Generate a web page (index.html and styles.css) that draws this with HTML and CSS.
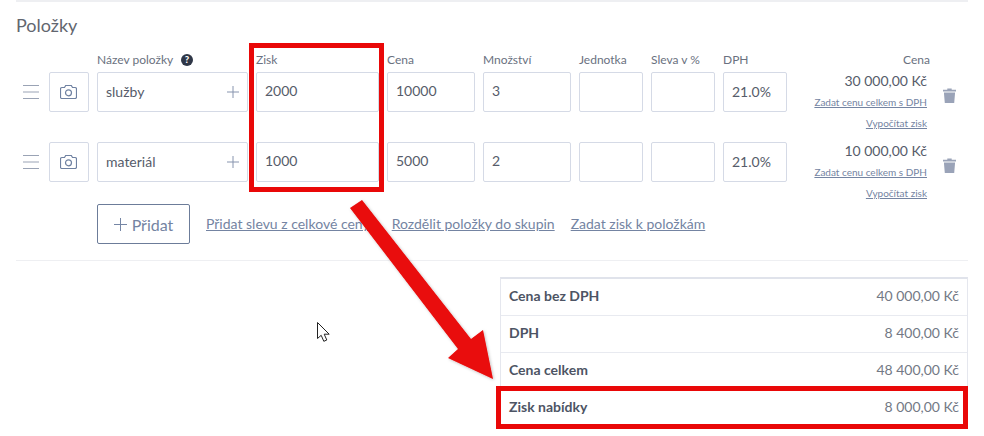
FILE: index.html
```html
<!DOCTYPE html>
<html lang="cs">
<head>
<meta charset="utf-8">
<title>Položky</title>
<link rel="stylesheet" href="styles.css">
</head>
<body>
<main class="page">
  <div class="rule-top"></div>
  <h2 class="title">Položky</h2>

  <div class="items">
    <div class="labels">
      <span class="label-name">Název položky
        <svg class="help" viewBox="0 0 12 12" width="12" height="12"><circle cx="6" cy="6" r="6" fill="#2f3747"/><text x="6" y="9.400" text-anchor="middle" class="help-mark">?</text></svg>
      </span>
      <span>Zisk</span><span>Cena</span><span>Množství</span><span>Jednotka</span><span>Sleva v %</span><span>DPH</span>
      <span class="label-price">Cena</span>
    </div>

    <div class="row">
      <svg class="drag" viewBox="0 0 16 14" width="16" height="14"><path d="M0 .5h16M0 7h16M0 13.500h16" stroke="#9aa3b5" fill="none"/></svg>
      <div class="box camera"><svg viewBox="0 0 17 14" width="17" height="14"><path d="M2 2.500h2.500l1.200-2h5.600l1.200 2H15q1.500 0 1.500 1.500v8q0 1.500-1.500 1.500H2Q.5 13.500.5 12V4Q.5 2.500 2 2.500z" fill="none" stroke="#6f81a1" stroke-width="1.200"/><circle cx="8.500" cy="7.800" r="3" fill="none" stroke="#6f81a1" stroke-width="1.200"/></svg></div>
      <div class="box name"><span>služby</span><svg viewBox="0 0 12 12" width="12" height="12"><path d="M6 0v12M0 6h12" stroke="#8794ae" fill="none"/></svg></div>
      <div class="box">2000</div>
      <div class="box">10000</div>
      <div class="box">3</div>
      <div class="box"></div>
      <div class="box"></div>
      <div class="box box-vat">21.0%</div>
      <div class="price">
        <span class="amount">30 000,00 Kč</span>
        <a class="mini-link">Zadat cenu celkem s DPH</a>
        <a class="mini-link">Vypočítat zisk</a>
      </div>
      <svg class="trash" viewBox="0 0 13 15" width="13" height="15"><path d="M0 1.800h4.300V.5h4.400v1.300H13v1.700H0zM.9 4.500h11.200l-.9 10.500H1.800z" fill="#9aa3b8"/></svg>
    </div>

    <div class="row">
      <svg class="drag" viewBox="0 0 16 14" width="16" height="14"><path d="M0 .5h16M0 7h16M0 13.500h16" stroke="#9aa3b5" fill="none"/></svg>
      <div class="box camera"><svg viewBox="0 0 17 14" width="17" height="14"><path d="M2 2.500h2.500l1.200-2h5.600l1.200 2H15q1.500 0 1.500 1.500v8q0 1.500-1.500 1.500H2Q.5 13.500.5 12V4Q.5 2.500 2 2.500z" fill="none" stroke="#6f81a1" stroke-width="1.200"/><circle cx="8.500" cy="7.800" r="3" fill="none" stroke="#6f81a1" stroke-width="1.200"/></svg></div>
      <div class="box name"><span>materiál</span><svg viewBox="0 0 12 12" width="12" height="12"><path d="M6 0v12M0 6h12" stroke="#8794ae" fill="none"/></svg></div>
      <div class="box">1000</div>
      <div class="box">5000</div>
      <div class="box">2</div>
      <div class="box"></div>
      <div class="box"></div>
      <div class="box box-vat">21.0%</div>
      <div class="price">
        <span class="amount">10 000,00 Kč</span>
        <a class="mini-link">Zadat cenu celkem s DPH</a>
        <a class="mini-link">Vypočítat zisk</a>
      </div>
      <svg class="trash" viewBox="0 0 13 15" width="13" height="15"><path d="M0 1.800h4.300V.5h4.400v1.300H13v1.700H0zM.9 4.500h11.200l-.9 10.500H1.800z" fill="#9aa3b8"/></svg>
    </div>

    <div class="actions">
      <button class="add"><svg viewBox="0 0 13 13" width="13" height="13"><path d="M6.500 0v13M0 6.500h13" stroke="#7586a5" fill="none"/></svg>Přidat</button>
      <a class="link link-first">Přidat slevu z celkové ceny</a>
      <a class="link">Rozdělit položky do skupin</a>
      <a class="link">Zadat zisk k položkám</a>
    </div>
  </div>

  <div class="rule-mid"></div>

  <div class="summary-wrap">
    <div class="summary">
      <div class="sum-row"><b>Cena bez DPH</b><span>40 000,00 Kč</span></div>
      <div class="sum-row"><b>DPH</b><span>8 400,00 Kč</span></div>
      <div class="sum-row"><b>Cena celkem</b><span>48 400,00 Kč</span></div>
      <div class="sum-row"><b>Zisk nabídky</b><span>8 000,00 Kč</span></div>
    </div>
  </div>
</main>

<div class="mark mark-zisk"></div>
<div class="mark mark-total"></div>

<svg class="overlay" viewBox="0 0 984 436" width="984" height="436">
  <defs><filter id="soft" x="-10%" y="-10%" width="120%" height="120%"><feDropShadow dx="1" dy="1" stdDeviation="1.500" flood-color="#000" flood-opacity=".25"/></filter></defs>
  <polygon points="350,208 362,200 471,339 483,330 493,379 448,358 458,349" fill="#e90808" filter="url(#soft)"/>
  <path d="M317.500 322.500v16l3.700-3.200 2.600 6 3-1.300-2.600-5.800h5z" fill="#fff" stroke="#222" stroke-width="1"/>
</svg>
</body>
</html>
```
FILE: styles.css
```css
* { box-sizing: border-box; }
html, body { margin: 0; padding: 0; background: #fff; }
body {
  width: 984px;
  height: 436px;
  overflow: hidden;
  position: relative;
  font-family: Lato, "Liberation Sans", sans-serif;
  color: #4a5160;
}
.page { padding: 0 16px; }
.rule-top { height: 2px; background: #eeeff2; }
.title {
  margin: 12px 0 0;
  height: 22px;
  font-size: 18px;
  line-height: 22px;
  font-weight: 400;
  color: #62666f;
}
.items { padding-top: 15px; }
.labels, .row {
  display: grid;
  grid-template-columns: 25px 40px 151px 123px 88px 88px 64px 64px 64px 132px 29px;
  column-gap: 8px;
}
.labels {
  height: 21px;
  grid-template-rows: 18px;
  font-size: 12px;
  line-height: 18px;
  color: #6a7180;
}
.labels > span:first-child { grid-column: 3; }
.label-name { display: flex; align-items: center; gap: 8px; }
.help { display: block; }
.help-mark { font-size: 9.500px; font-weight: 900; fill: #fff; }
.label-price { text-align: right; margin-right: -3px; }
.row { grid-template-rows: 40px; height: 40px; align-items: center; }
.row + .row { margin-top: 30px; }
.drag { justify-self: end; margin-right: 2px; }
.box {
  height: 40px;
  border: 1px solid #d5dae6;
  border-radius: 2px;
  padding: 0 8px;
  font-size: 14px;
  line-height: 36px;
  color: #565c6a;
  background: #fff;
}
.box-vat { line-height: 38px; }
.camera { display: flex; align-items: center; justify-content: center; padding: 0 2px 0 0; }
.name { display: flex; align-items: center; justify-content: space-between; padding-right: 8px; }
.price {
  display: flex;
  flex-direction: column;
  align-items: flex-end;
  align-self: start;
}
.amount { font-size: 14px; line-height: 18px; color: #565c6a; margin-bottom: 2px; }
.mini-link {
  font-size: 10px;
  line-height: 21px;
  color: #7484a2;
  text-decoration: underline;
}
.trash { justify-self: start; align-self: start; margin: 16px 0 0 8px; }
.actions {
  display: flex;
  align-items: center;
  height: 40px;
  margin: 22px 0 0 81px;
  gap: 16px;
}
.add {
  width: 93px;
  height: 40px;
  display: flex;
  align-items: center;
  justify-content: center;
  gap: 5px;
  border: 1px solid #6c7c99;
  border-radius: 2px;
  background: #fff;
  color: #7484a2;
  font: 400 16px Lato, "Liberation Sans", sans-serif;
  padding: 0;
}
.link {
  font-size: 14px;
  line-height: 18px;
  color: #7484a2;
  text-decoration: underline;
}
.link-first { margin-right: 6px; }
.rule-mid { height: 1px; background: #eeeff2; margin-top: 16px; }
.summary-wrap { display: flex; justify-content: flex-end; padding-top: 16px; }
.summary {
  width: 468px;
  border: 1px solid #e5e7ee;
  border-top: 2px solid #e0e3eb;
}
.sum-row {
  display: flex;
  justify-content: space-between;
  align-items: center;
  height: 37px;
  padding: 0 8px 4px;
  font-size: 14px;
  border-bottom: 1px solid #e8eaf0;
}
.sum-row b { font-weight: 700; color: #4d5464; }
.sum-row span { color: #737985; }
.mark { position: absolute; border: 5px solid #e90808; }
.mark-zisk { left: 249px; top: 43px; width: 135px; height: 149px; }
.mark-total { left: 496px; top: 386px; width: 472px; height: 43px; }
.overlay { position: absolute; left: 0; top: 0; pointer-events: none; }
```
